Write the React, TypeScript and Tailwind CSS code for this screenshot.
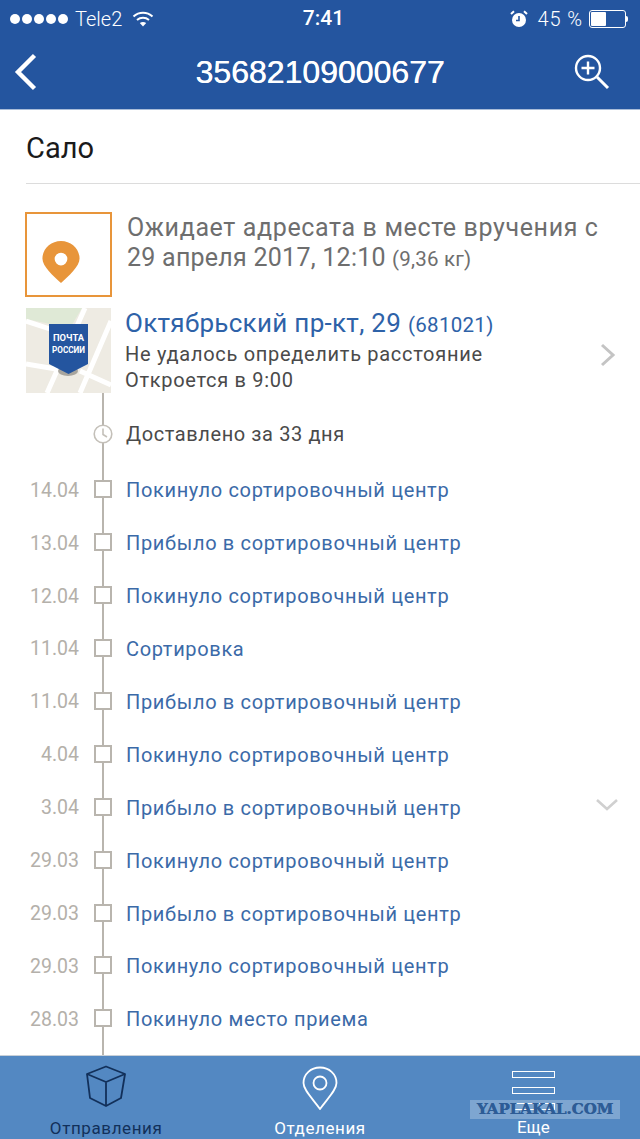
import React from 'react';

const events = [
  { date: '14.04', text: 'Покинуло сортировочный центр' },
  { date: '13.04', text: 'Прибыло в сортировочный центр' },
  { date: '12.04', text: 'Покинуло сортировочный центр' },
  { date: '11.04', text: 'Сортировка' },
  { date: '11.04', text: 'Прибыло в сортировочный центр' },
  { date: '4.04', text: 'Покинуло сортировочный центр' },
  { date: '3.04', text: 'Прибыло в сортировочный центр', chevron: true },
  { date: '29.03', text: 'Покинуло сортировочный центр' },
  { date: '29.03', text: 'Прибыло в сортировочный центр' },
  { date: '29.03', text: 'Покинуло сортировочный центр' },
  { date: '28.03', text: 'Покинуло место приема' },
];

const StatusBar: React.FC = () => (
  <div className="h-[36px] flex items-center justify-between pl-[10px] pr-[12px] pt-[1px] text-white text-[20px] font-['Roboto',sans-serif] font-light">
    <div className="w-[200px] flex items-center">
      <div className="flex gap-[2px]">
        {[0, 1, 2, 3, 4].map(i => (
          <div key={i} className="w-[10px] h-[10px] rounded-full bg-white" />
        ))}
      </div>
      <span className="ml-[7px]">Tele2</span>
      <svg className="ml-[10px]" width="22" height="16" viewBox="0 0 22 16" fill="none" stroke="white" strokeWidth="2">
        <path d="M1.5 5.5C7 0.5 15 0.5 20.5 5.5" />
        <path d="M5 9C8.5 6 13.5 6 17 9" />
        <path d="M11 15.5L7.8 12C9.6 10.6 12.4 10.6 14.2 12Z" fill="white" stroke="none" />
      </svg>
    </div>
    <span className="ml-[9px] font-medium text-[21px]">7:41</span>
    <div className="w-[200px] flex items-center justify-end">
      <svg width="18" height="18" viewBox="0 0 18 18" fill="white">
        <circle cx="9" cy="10" r="7" />
        <path d="M1 4L4 1.2M17 4L14 1.2" stroke="white" strokeWidth="2" />
        <path d="M9 6V10.5H6" stroke="#24559f" strokeWidth="1.6" fill="none" />
      </svg>
      <span className="ml-[10px] tracking-[0.9px]">45 %</span>
      <div className="ml-[6px] w-[37px] h-[18px] border border-white rounded-[3px] p-[1px] flex">
        <div className="w-[15px] bg-white rounded-[1px]" />
      </div>
      <div className="w-[2px] h-[6px] bg-white rounded-r-[2px]" />
    </div>
  </div>
);

const Header: React.FC = () => (
  <div className="h-[110px] shrink-0 bg-[#24559f] border-b border-[#a9bcd8]">
    <StatusBar />
    <div className="h-[72px] flex items-center justify-between pl-[14px] pr-[30px]">
      <svg width="24" height="38" viewBox="0 0 24 38" fill="none" stroke="white" strokeWidth="4.4">
        <path d="M20.5 2.5L4 19L20.5 35.5" />
      </svg>
      <span className="ml-[28px] text-white text-[32px] font-['Liberation_Sans',sans-serif] font-normal [text-shadow:0.4px_0_0_white]">
        35682109000677
      </span>
      <svg width="36" height="36" viewBox="0 0 36 36" fill="none" stroke="white" strokeWidth="2.4">
        <circle cx="14" cy="14" r="12" />
        <path d="M14 7.5V20.5M7.5 14H20.5" />
        <path d="M23 23L34 34" strokeWidth="3" />
      </svg>
    </div>
  </div>
);

const MapThumb: React.FC = () => (
  <svg width="85" height="85" viewBox="0 0 85 85" className="shrink-0">
    <rect width="85" height="85" fill="#eeebe3" />
    <path d="M0 0H56L44 20L0 11Z" fill="#dfe9d6" />
    <path d="M59 0L21 85M85 13L54 85M0 13L30 23M54 63L85 77M0 56L30 61" stroke="white" strokeWidth="5" fill="none" />
    <ellipse cx="42" cy="63" rx="10" ry="5" fill="#a8a59e" />
    <path d="M23 16H62V56L42.5 66L23 56Z" fill="#24559f" />
    <text x="42.5" y="33" textAnchor="middle" fill="white" fontSize="9" fontWeight="700" fontFamily="Roboto, sans-serif" textLength={31} lengthAdjust="spacingAndGlyphs">ПОЧТА</text>
    <text x="42.5" y="45" textAnchor="middle" fill="white" fontSize="9" fontWeight="700" fontFamily="Roboto, sans-serif" textLength={33} lengthAdjust="spacingAndGlyphs">РОССИИ</text>
  </svg>
);

const App: React.FC = () => (
  <div className="w-[640px] h-[1139px] flex flex-col bg-white overflow-hidden relative font-['Roboto',sans-serif]">
    <Header />

    <div className="flex-1 min-h-0 relative">
      <div className="pl-[26px]">
        <div className="h-[74px] flex items-center border-b border-[#dcdcdc] text-[29px] text-[#1a1a1a] pt-[4px]">
          Сало
        </div>
      </div>

      {/* Status */}
      <div className="mt-[28px] ml-[25px] flex">
        <div className="w-[87px] h-[85px] border-2 border-[#e8953a] pl-[15px] pt-[27px] shrink-0">
          <svg width="38" height="43" viewBox="0 0 38 44">
            <path fillRule="evenodd" fill="#e8953a" d="M19 0C29.5 0 38 8 38 18C38 26 27 36 19 43C11 36 0 26 0 18C0 8 8.5 0 19 0ZM19 12A6.5 6.5 0 1 0 19 25A6.5 6.5 0 1 0 19 12Z" />
          </svg>
        </div>
        <div className="ml-[15px] pt-[1px] text-[25px] leading-[30px] text-[#6e6e6e]">
          <div className="tracking-[0.63px]">Ожидает адресата в месте вручения с</div>
          <div>
            <span className="tracking-[0.25px]">29 апреля 2017, 12:10</span>{' '}
            <span className="text-[20.5px] tracking-[0.2px]">(9,36 кг)</span>
          </div>
        </div>
      </div>

      {/* Office */}
      <div className="mt-[10px] ml-[26px] mr-[24px] flex items-center">
        <MapThumb />
        <div className="ml-[14px] flex-1 pt-[1px]">
          <div className="text-[26px] leading-[31px] text-[#2e62a8] tracking-[0.3px]">
            Октябрьский пр-кт, 29 <span className="text-[20.5px]">(681021)</span>
          </div>
          <div className="text-[20px] leading-[26px] text-[#4a4a4a] tracking-[0.7px]">Не удалось определить расстояние</div>
          <div className="text-[20px] leading-[26px] text-[#4a4a4a] tracking-[0.7px]">Откроется в 9:00</div>
        </div>
        <svg className="mt-[9px]" width="16" height="24" viewBox="0 0 16 24" fill="none" stroke="#c4c4c4" strokeWidth="3">
          <path d="M2 2L13 12L2 22" />
        </svg>
      </div>

      {/* Timeline */}
      <div className="relative">
        <div className="absolute left-[102px] top-0 h-[700px] w-[2px] bg-[#b9b5ae]" />

        <div className="relative h-[82px] flex items-center">
          <div className="w-[113px] flex justify-end shrink-0">
            <svg width="20" height="20" viewBox="0 0 20 20" fill="white" stroke="#c4c0b9" strokeWidth="1.6">
              <circle cx="10" cy="10" r="8.8" />
              <path d="M10 4.5V10.5L14 13" fill="none" />
            </svg>
          </div>
          <span className="ml-[13px] text-[20px] text-[#4a4a4a] tracking-[0.6px]">Доставлено за 33 дня</span>
        </div>

        <div className="relative flex flex-col mt-[-11px]">
          {events.map((ev, i) => (
            <div key={i} className="h-[52.9px] shrink-0 flex items-center">
              <div className="w-[79px] text-right text-[19.5px] text-[#b4b0aa] shrink-0">{ev.date}</div>
              <div className="ml-[15px] -mt-[2px] w-[18px] h-[18px] border-2 border-[#b9b5ae] bg-white shrink-0" />
              <div className="ml-[14px] text-[20px] text-[#3b6aa8] tracking-[0.66px]">{ev.text}</div>
              {ev.chevron && (
                <svg className="ml-auto mr-[21px] -mt-[6px]" width="24" height="14" viewBox="0 0 24 14" fill="none" stroke="#d0d0d0" strokeWidth="2.6">
                  <path d="M2 2L12 11L22 2" />
                </svg>
              )}
            </div>
          ))}
        </div>
      </div>
    </div>

    {/* Tab bar */}
    <div className="h-[84px] shrink-0 bg-[#5388c2] grid grid-cols-3 relative z-10 border-t border-[#c8d0d8]">
      <div className="flex flex-col items-center pt-[9px] pr-[1px]">
        <svg width="42" height="42" viewBox="0 0 42 42" fill="none" stroke="#12305a" strokeWidth="1.8" strokeLinejoin="round">
          <path d="M21 1.5L40 9L36 33L21 41L5 33L2 9Z" />
          <path d="M2 9L21 17L40 9M21 17V41" />
        </svg>
        <span className="mt-[9px] text-[17px] text-[#12305a] tracking-[0.6px]">Отправления</span>
      </div>
      <div className="flex flex-col items-center pt-[10px]">
        <svg width="36" height="44" viewBox="0 0 36 44" fill="none" stroke="white" strokeWidth="1.8">
          <path d="M18 43C10 32 1.5 24 1.5 17C1.5 8 9 1.5 18 1.5C27 1.5 34.5 8 34.5 17C34.5 24 26 32 18 43Z" />
          <circle cx="18" cy="17" r="6.5" />
        </svg>
        <span className="mt-[6px] text-[17px] text-white tracking-[0.6px]">Отделения</span>
      </div>
      <div className="flex flex-col items-center pt-[15px]">
        <div className="flex flex-col gap-[9px]">
          {[0, 1, 2].map(i => (
            <div key={i} className="w-[43px] h-[7px] border border-white" />
          ))}
        </div>
        <span className="mt-[9px] text-[17px] leading-[17px] text-white">Еще</span>
      </div>
    </div>

    {/* Watermark */}
    <div className="absolute z-20 left-[470px] top-[1100px] w-[150px] h-[19px] bg-white/25 flex items-center justify-center font-['DejaVu_Serif',serif] font-bold text-[15px] leading-[19px] text-[#2d5c96] [text-shadow:0.5px_0_0_#2d5c96]">
      YAPLAKAL.COM
    </div>
  </div>
);

export default App;
